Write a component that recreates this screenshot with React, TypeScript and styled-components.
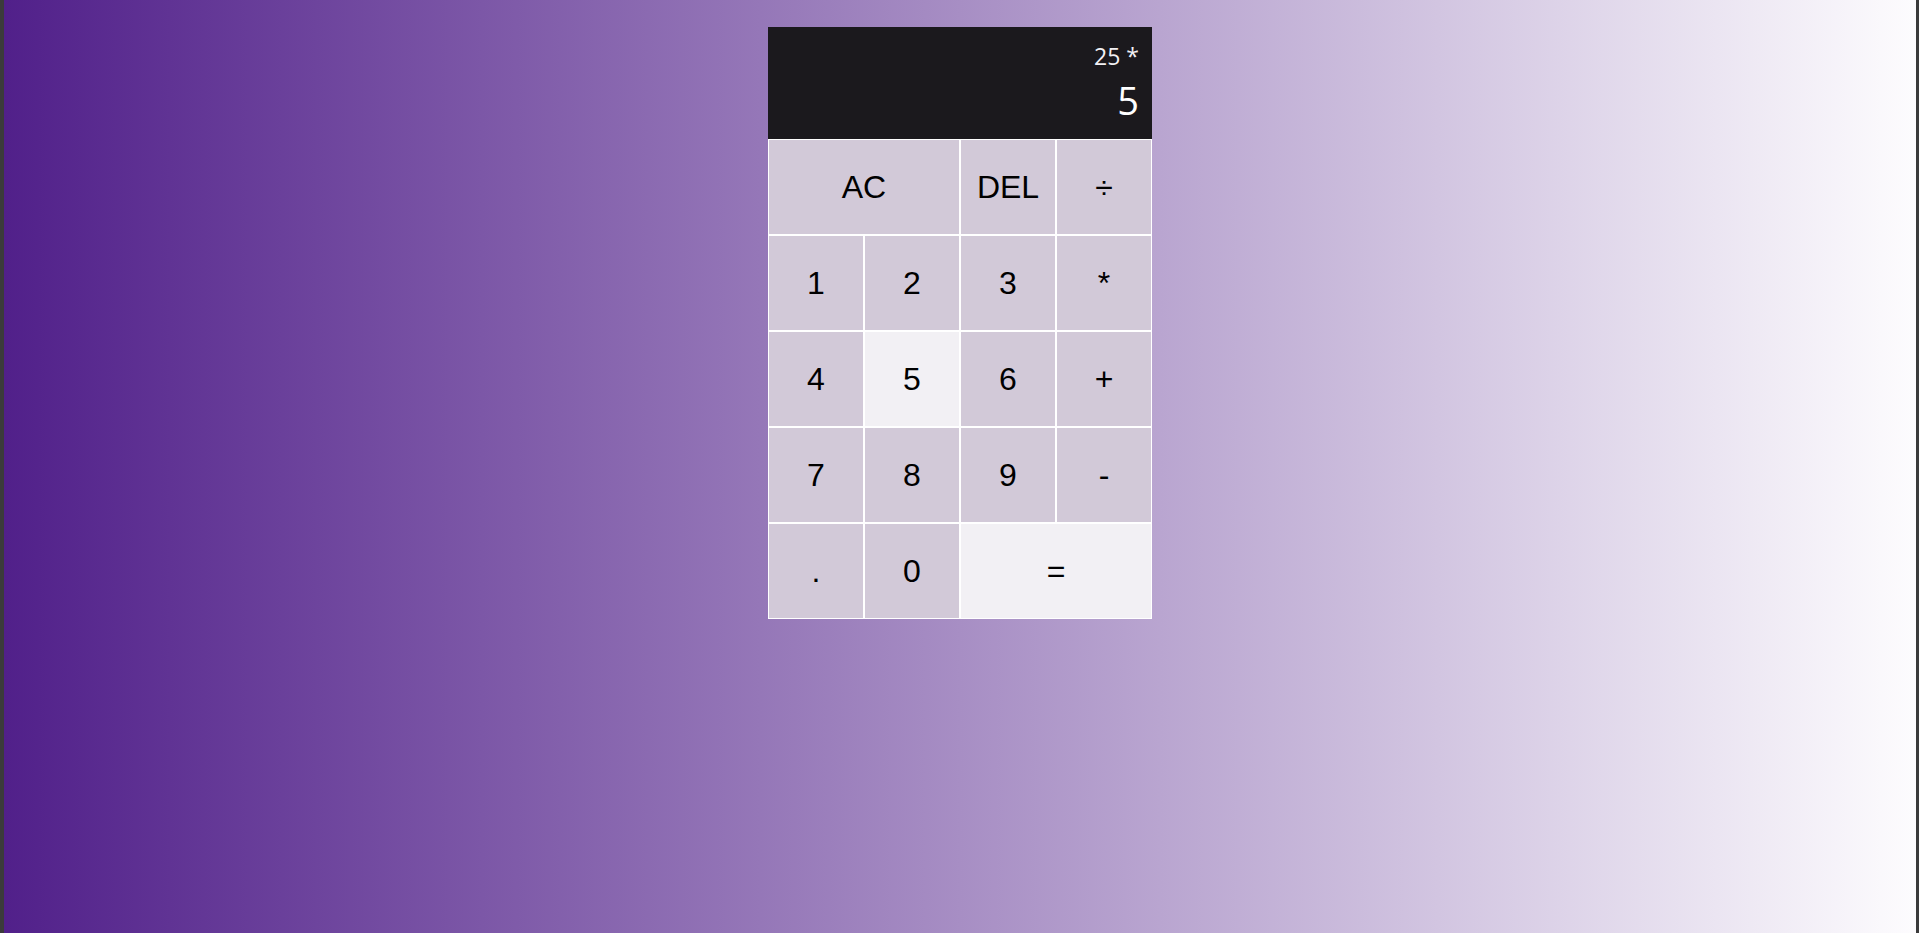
import React from "react";
import styled, { createGlobalStyle } from "styled-components";

const GlobalStyle = createGlobalStyle`
    *, *::before, *::after {
        box-sizing: border-box;
    }

    body {
        margin: 0;
        background-color: #3b3b3b;
        font-family: "Liberation Sans", Arial, sans-serif;
    }
`;

const Frame = styled.div`
    height: 100vh;
    padding: 0 3px 0 4px;
    overflow: hidden;
`;

const Page = styled.main`
    height: 100%;
    padding-top: 27px;
    background: linear-gradient(to right, #51208a, #fdfcfe);
`;

const Grid = styled.div`
    display: grid;
    justify-content: center;
    grid-template-columns: repeat(4, 96px);
    grid-template-rows: 112px repeat(5, 96px);
`;

const Output = styled.div`
    grid-column: 1 / -1;

    display: flex;
    flex-direction: column;
    align-items: flex-end;
    justify-content: space-around;

    padding: 8px 13px 13px 10px;

    background-color: #1b191d;
    font-family: "Open Sans", "Noto Sans", sans-serif;
    color: #ffffff;
    word-break: break-all;
`;

const Previous = styled.div`
    margin-top: 3px;
    font-size: 23px;
    line-height: 1;
    color: #f2f0f4;
`;

const Current = styled.div`
    font-size: 38px;
    line-height: 1;
`;

const Key = styled.button<{ $span?: number; $active?: boolean }>`
    grid-column: span ${(p) => p.$span ?? 1};

    border: 1px solid #ffffff;
    outline: none;
    padding: 0;

    background-color: ${(p) => (p.$active ? "#f2f0f4" : "#d2c9d8")};
    color: #000000;
    font-family: "Liberation Sans", Arial, sans-serif;
    font-size: 32px;
    cursor: pointer;
`;

const keys: { label: string; span?: number; active?: boolean }[] = [
    { label: "AC", span: 2 },
    { label: "DEL" },
    { label: "÷" },
    { label: "1" },
    { label: "2" },
    { label: "3" },
    { label: "*" },
    { label: "4" },
    { label: "5", active: true },
    { label: "6" },
    { label: "+" },
    { label: "7" },
    { label: "8" },
    { label: "9" },
    { label: "-" },
    { label: "." },
    { label: "0" },
    { label: "=", span: 2, active: true },
];

export default function App(): React.ReactElement {
    return (
        <Frame>
            <GlobalStyle />
            <Page>
                <Grid>
                    <Output>
                        <Previous>25 *</Previous>
                        <Current>5</Current>
                    </Output>
                    {keys.map((k) => (
                        <Key key={k.label} $span={k.span} $active={k.active}>
                            {k.label}
                        </Key>
                    ))}
                </Grid>
            </Page>
        </Frame>
    );
}
